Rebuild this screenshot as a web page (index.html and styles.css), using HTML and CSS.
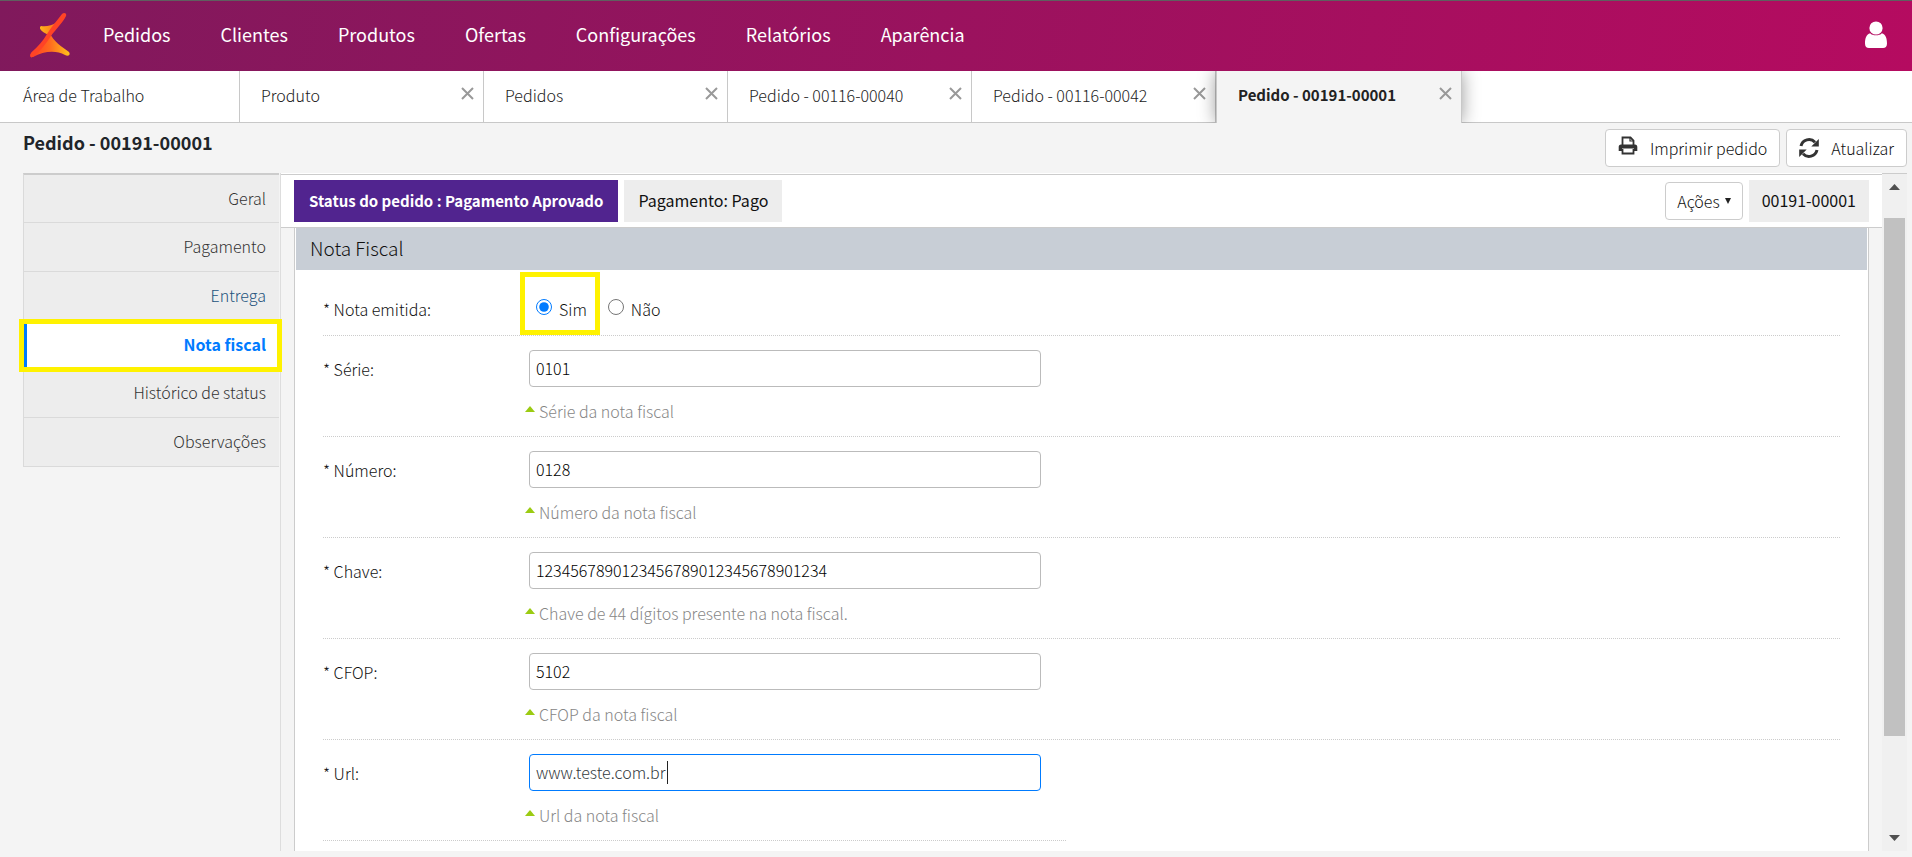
FILE: index.html
```html
<!DOCTYPE html>
<html lang="pt-BR">
<head>
  <meta charset="UTF-8" />
  <meta name="viewport" content="width=device-width, initial-scale=1" />
  <title>Pedido - 00191-00001</title>
  <link rel="stylesheet" href="styles.css">
</head>
<body>
  <header class="topbar">
    <a href="#" class="logo" aria-label="Início">
      <svg width="40" height="46" viewBox="0 0 40 46">
        <defs>
          <linearGradient id="wing" x1="0" y1="0" x2="1" y2="0">
            <stop offset="0" stop-color="#ff3b24" />
            <stop offset="0.5" stop-color="#ff6a1f" />
            <stop offset="1" stop-color="#ffc21a" />
          </linearGradient>
          <linearGradient id="fold" x1="0" y1="0" x2="1" y2="0">
            <stop offset="0" stop-color="#ffb61a" />
            <stop offset="1" stop-color="#ff6a1f" />
          </linearGradient>
        </defs>
        <path d="M11 14C15 15 22 14 27 10L20 24C17 22 9 19 10 15Z" fill="url(#fold)" />
        <path d="M20 21C23 29 32 35 39 40C41 43 38 45 35 43C26 38 14 39 3 45C-1 46 0 42 2 40C9 34 15 29 20 21Z" fill="url(#wing)" />
        <path d="M32 2C34 0 37 1 36 4C34 9 26 17 21 24C16 32 10 39 3 45C-1 46 0 42 2 40C8 34 13 29 17 22C21 15 27 9 32 2Z" fill="#ff4326" />
      </svg>
    </a>
    <nav class="main-nav">
      <a href="#">Pedidos</a>
      <a href="#">Clientes</a>
      <a href="#">Produtos</a>
      <a href="#">Ofertas</a>
      <a href="#">Configurações</a>
      <a href="#">Relatórios</a>
      <a href="#">Aparência</a>
    </nav>
    <button class="user-btn" aria-label="Usuário">
      <svg width="24" height="28" viewBox="0 0 24 28" fill="#fff">
        <circle cx="12" cy="7" r="6.6" />
        <path d="M6.2 12.2C8 15 16 15 17.800 12.200C21.500 13 23 17 23 22.500C23 25.500 21.500 27 19 27H5C2.500 27 1 25.500 1 22.500C1 17 2.500 13 6.200 12.200Z" />
      </svg>
    </button>
  </header>

  <div class="tabs">
    <div class="tab home"><a href="#">Área de Trabalho</a></div>
    <div class="tab"><a href="#">Produto</a><button class="close" aria-label="Fechar"><svg width="13" height="13" viewBox="0 0 13 13"><path d="M1 1L12 12M12 1L1 12" /></svg></button></div>
    <div class="tab"><a href="#">Pedidos</a><button class="close" aria-label="Fechar"><svg width="13" height="13" viewBox="0 0 13 13"><path d="M1 1L12 12M12 1L1 12" /></svg></button></div>
    <div class="tab"><a href="#">Pedido - 00116-00040</a><button class="close" aria-label="Fechar"><svg width="13" height="13" viewBox="0 0 13 13"><path d="M1 1L12 12M12 1L1 12" /></svg></button></div>
    <div class="tab"><a href="#">Pedido - 00116-00042</a><button class="close" aria-label="Fechar"><svg width="13" height="13" viewBox="0 0 13 13"><path d="M1 1L12 12M12 1L1 12" /></svg></button></div>
    <div class="tab active"><a href="#">Pedido - 00191-00001</a><button class="close" aria-label="Fechar"><svg width="13" height="13" viewBox="0 0 13 13"><path d="M1 1L12 12M12 1L1 12" /></svg></button></div>
  </div>

  <div class="page-head">
    <h1>Pedido - 00191-00001</h1>
    <div class="page-actions">
      <button class="btn">
        <svg class="print" width="20" height="20" viewBox="0 0 20 20">
          <path d="M4.500 9V1.500H12.500L15.500 4.500V9" fill="none" stroke="#333" stroke-width="1.800" />
          <path d="M12 1.500V5H15.500" fill="none" stroke="#333" stroke-width="1.200" />
          <path d="M3 8.500H17C18.500 8.500 19.300 9.500 19.300 11V15H16V12.500H4V15H0.700V11C0.700 9.500 1.500 8.500 3 8.500Z" fill="#333" />
          <path d="M4.500 13V17.500H15.500V13" fill="none" stroke="#333" stroke-width="1.800" />
        </svg>
        Imprimir pedido
      </button>
      <button class="btn">
        <svg width="20" height="20" viewBox="0 0 20 20">
          <path d="M2 8A8.200 8.200 0 0 1 16 4.200" fill="none" stroke="#333" stroke-width="3" />
          <path d="M19.800 1V8.500H12.300Z" fill="#333" />
          <path d="M18 12A8.200 8.200 0 0 1 4 15.800" fill="none" stroke="#333" stroke-width="3" />
          <path d="M0.200 19V11.500H7.700Z" fill="#333" />
        </svg>
        Atualizar
      </button>
    </div>
  </div>

  <main class="workspace">
    <nav class="side-nav">
      <a href="#">Geral</a>
      <a href="#">Pagamento</a>
      <a href="#" class="hovered">Entrega</a>
      <a href="#" class="current">Nota fiscal</a>
      <a href="#">Histórico de status</a>
      <a href="#">Observações</a>
    </nav>

    <section class="content">
      <div class="status-bar">
        <span class="badge status">Status do pedido : Pagamento Aprovado</span>
        <span class="badge">Pagamento: Pago</span>
        <button class="btn actions">Ações <svg width="6" height="6" viewBox="0 0 6 6"><path d="M0 0H6L3 6Z" fill="#222" /></svg></button>
        <span class="badge number">00191-00001</span>
      </div>

      <form class="panel">
        <h2>Nota Fiscal</h2>
        <div class="fields">
          <div class="row radios" role="radiogroup" aria-labelledby="emitida">
            <span class="label" id="emitida">* Nota emitida:</span>
            <label class="radio marked"><input type="radio" name="emitida" checked>Sim</label>
            <label class="radio"><input type="radio" name="emitida">Não</label>
          </div>
          <div class="row">
            <label class="label" for="serie">* Série:</label>
            <div class="field">
              <input type="text" id="serie" value="0101">
              <p class="hint">Série da nota fiscal</p>
            </div>
          </div>
          <div class="row">
            <label class="label" for="numero">* Número:</label>
            <div class="field">
              <input type="text" id="numero" value="0128">
              <p class="hint">Número da nota fiscal</p>
            </div>
          </div>
          <div class="row">
            <label class="label" for="chave">* Chave:</label>
            <div class="field">
              <input type="text" id="chave" value="1234567890123456789012345678901234">
              <p class="hint">Chave de 44 dígitos presente na nota fiscal.</p>
            </div>
          </div>
          <div class="row">
            <label class="label" for="cfop">* CFOP:</label>
            <div class="field">
              <input type="text" id="cfop" value="5102">
              <p class="hint">CFOP da nota fiscal</p>
            </div>
          </div>
          <div class="row last">
            <label class="label" for="url">* Url:</label>
            <div class="field editing">
              <input type="text" id="url" value="www.teste.com.br">
              <p class="hint">Url da nota fiscal</p>
            </div>
          </div>
        </div>
      </form>
    </section>

    <div class="scrollbar" aria-hidden="true">
      <svg width="11" height="6" viewBox="0 0 11 6"><path d="M5.500 0L11 6H0Z" /></svg>
      <div class="track"><div class="thumb"></div></div>
      <svg width="11" height="6" viewBox="0 0 11 6"><path d="M0 0H11L5.500 6Z" /></svg>
    </div>
  </main>
</body>
</html>
```

FILE: styles.css
```css
* {
  box-sizing: border-box;
}
body {
  margin: 0;
  height: 100vh;
  overflow: hidden;
  display: flex;
  flex-direction: column;
  padding-bottom: 6px;
  background: #f4f4f4;
  color: #111;
  font-family: "Noto Sans CJK JP", "Noto Sans CJK SC", sans-serif;
  font-size: 16px;
  font-weight: 300;
  line-height: 24px;
}
a {
  color: inherit;
  text-decoration: none;
}
button,
input {
  font: inherit;
  color: inherit;
}
button {
  cursor: pointer;
}

/* Top bar */
.topbar {
  flex: none;
  display: flex;
  align-items: center;
  height: 71px;
  padding: 0 24px 3px 30px;
  border-top: 1px solid #5f5f5f;
  background: linear-gradient(100deg, #80195c, #b50b60);
  color: #fff;
}
.logo {
  display: flex;
  margin-right: 33px;
}
.main-nav {
  display: flex;
  flex: 1;
  gap: 50px;
  padding-bottom: 2px;
  font-size: 18px;
  font-weight: 400;
}
.user-btn {
  display: flex;
  padding: 0;
  border: 0;
  background: none;
}

/* Tabs */
.tabs {
  flex: none;
  display: flex;
  height: 52px;
  background: #fff;
  border-bottom: 1px solid #c8c8c8;
}
.tab {
  position: relative;
  display: flex;
  justify-content: space-between;
  width: 244px;
  padding: 12px 9px 0 21px;
  border-right: 1px solid #c8c8c8;
  color: #222;
}
.tab.home {
  width: 240px;
  padding-left: 23px;
}
.tab.active {
  width: 246px;
  height: 52px;
  border-left: 1px solid #c8c8c8;
  background: #f4f4f4;
  box-shadow: 0 0 18px rgba(0, 0, 0, 0.4);
  clip-path: inset(0 -20px 0 -20px);
  font-size: 15px;
  font-weight: 700;
}
.close {
  align-self: flex-start;
  display: flex;
  padding: 4px 0 0;
  border: 0;
  background: none;
}
.close path {
  stroke: #999;
  stroke-width: 2;
}

/* Page title */
.page-head {
  flex: none;
  display: flex;
  justify-content: space-between;
  height: 50px;
  padding: 6px 5px 0 23px;
}
h1 {
  margin: 1px 0 0;
  color: #212529;
  font-size: 18px;
  font-weight: 700;
  line-height: 24px;
}
.page-actions {
  display: flex;
  gap: 6px;
}
.btn {
  display: flex;
  align-items: center;
  gap: 12px;
  height: 38px;
  padding: 0 12px;
  border: 1px solid #ccc;
  border-radius: 4px;
  background: #fff;
}
.btn .print {
  margin-bottom: 4px;
}

/* Workspace */
.workspace {
  flex: 1;
  min-height: 0;
  display: flex;
  margin: 0 5px 0 23px;
}
.side-nav {
  width: 258px;
  padding-right: 1px;
  border-right: 1px solid #ddd;
}
.side-nav a {
  display: block;
  height: 49px;
  padding: 11px 13px 0 0;
  border: 1px solid #dadada;
  border-width: 0 0 1px 1px;
  background: #ededed;
  color: #333;
  text-align: right;
}
.side-nav a:first-child {
  height: 50px;
  border-top: 2px solid #ccc;
}
.side-nav a.hovered {
  color: #23527c;
}
.side-nav a.current {
  position: relative;
  height: 48px;
  border: 0;
  border-left: 4px solid #007bff;
  background: #fff;
  color: #007bff;
  font-weight: 700;
}
.current::after {
  content: "";
  position: absolute;
  inset: -2px -3px -3px -8px;
  border: 5px solid #fff200;
}
.content {
  flex: 1;
  min-width: 0;
  overflow: hidden;
  display: flex;
  flex-direction: column;
  border-top: 1px solid #fff;
}
.status-bar {
  flex: none;
  display: flex;
  align-items: center;
  gap: 6px;
  height: 54px;
  padding: 0 13px;
  border-top: 1px solid #ccc;
  border-bottom: 1px solid #ccc;
  background: #fff;
}
.badge {
  height: 42px;
  padding: 0 14px;
  background: #ededed;
  font-weight: 400;
  line-height: 41px;
}
.badge.status {
  padding: 0 15px;
  background: #51248f;
  color: #fff;
  font-size: 15px;
  font-weight: 700;
}
.badge.number {
  padding: 0 13px;
}
.btn.actions {
  gap: 5px;
  margin-left: auto;
  padding: 0 11px;
}

/* Form */
.panel {
  flex: 1;
  margin: 0 13px;
  padding: 0 1px;
  border: 1px solid #ccc;
  border-width: 0 1px;
  background: #fff;
}
h2 {
  margin: 0;
  padding: 0 14px 2px;
  background: #c8ced6;
  font-size: 19px;
  font-weight: 300;
  line-height: 40px;
}
.fields {
  padding: 0 27px;
}
.row {
  display: flex;
  height: 101px;
  padding-top: 14px;
  border-bottom: 1px dotted #ccc;
}
.row.radios {
  height: 66px;
  padding-top: 27px;
}
.row.last {
  max-width: 743px;
}
.label {
  width: 206px;
  padding-top: 7px;
}
.radios .label {
  padding-top: 0;
}
.radio {
  position: relative;
  align-self: flex-start;
  display: flex;
  margin-left: 7px;
  margin-right: 14px;
}
.radio input {
  width: 16px;
  height: 16px;
  margin: 2px 7px 0 0;
  accent-color: #007bff;
}
.radio.marked::after {
  content: "";
  position: absolute;
  inset: -25px -13px -14px -16px;
  border: 5px solid #fff200;
}
.field {
  position: relative;
}
.field input {
  display: block;
  width: 512px;
  height: 37px;
  padding: 0 6px 2px;
  border: 1px solid #bbb;
  border-radius: 4px;
  background: #fff;
  color: #000;
}
.field.editing input {
  border-color: #007bff;
  color: #333a40;
  outline: none;
}
/* text cursor after the url */
.field.editing::after {
  content: "";
  position: absolute;
  top: 7px;
  left: 138px;
  height: 23px;
  border-left: 1px solid #222;
}
.hint {
  display: flex;
  gap: 4px;
  margin: 12px 0 0 -4px;
  color: #868686;
}
.hint::before {
  content: "";
  align-self: flex-start;
  margin-top: 7px;
  border: 5px solid transparent;
  border-top: 0;
  border-bottom: 6px solid #9bcb12;
}

/* Scrollbar */
.scrollbar {
  display: flex;
  flex-direction: column;
  align-items: center;
  width: 25px;
  padding: 10px 0;
  border-top: 1px solid #ccc;
  background: #f0f0f0;
}
.scrollbar svg {
  flex: none;
  fill: #505050;
}
.track {
  flex: 1;
  width: 21px;
  padding: 28px 0;
}
.thumb {
  height: 88%;
  background: #c1c1c1;
}
```
